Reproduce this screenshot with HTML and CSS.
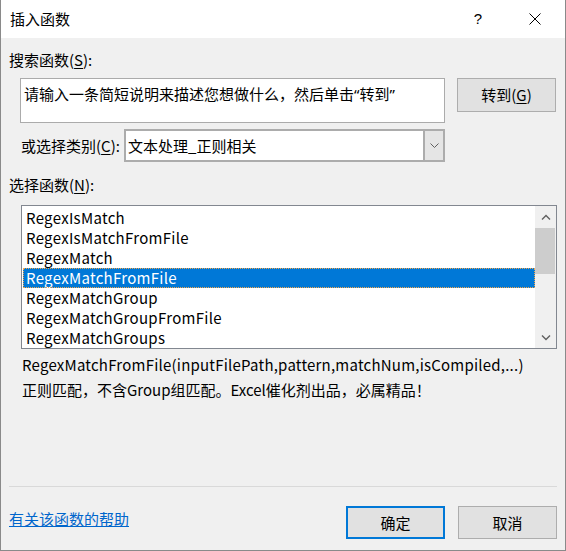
FILE: index.html
```html
<!DOCTYPE html>
<html lang="zh-CN">
<head>
  <meta charset="UTF-8" />
  <meta name="viewport" content="width=device-width, initial-scale=1.0"/>
  <title>插入函数</title>
  <link rel="stylesheet" href="styles.css">
</head>
<body>
  <div class="dialog">
    <div class="titlebar">
      <span class="title">插入函数</span>
      <span class="help">?</span>
      <span class="close">
        <svg width="12" height="12" viewBox="0 0 12 12"><path d="M0.5 0.5L11.5 11.5M11.5 0.5L0.5 11.5" stroke="#000" stroke-width="1" fill="none"/></svg>
      </span>
    </div>

    <div class="content">
      <div class="label">搜索函数(<u>S</u>):</div>
      <div class="search-row">
        <div class="search-box">请输入一条简短说明来描述您想做什么，然后单击<span class="quote">“</span>转到<span class="quote">”</span></div>
        <button class="btn go">转到(<u>G</u>)</button>
      </div>

      <div class="category-row">
        <span class="category-label">或选择类别(<u>C</u>):</span>
        <div class="combo">
          <span class="combo-text">文本处理_正则相关</span>
          <span class="combo-arrow">
            <svg width="9" height="5" viewBox="0 0 9 5"><path d="M0.5 0.5L4.5 4.5L8.5 0.5" stroke="#606060" stroke-width="1" fill="none"/></svg>
          </span>
        </div>
      </div>

      <div class="label list-label">选择函数(<u>N</u>):</div>
      <div class="listbox">
        <ul class="items">
          <li>RegexIsMatch</li>
          <li>RegexIsMatchFromFile</li>
          <li>RegexMatch</li>
          <li class="selected">RegexMatchFromFile</li>
          <li>RegexMatchGroup</li>
          <li>RegexMatchGroupFromFile</li>
          <li>RegexMatchGroups</li>
        </ul>
        <div class="scrollbar">
          <span class="arrow">
            <svg width="10" height="6" viewBox="0 0 10 6"><path d="M1 5.5L5 1.5L9 5.5" stroke="#606060" stroke-width="1.4" fill="none"/></svg>
          </span>
          <span class="thumb"></span>
          <span class="track"></span>
          <span class="arrow">
            <svg width="10" height="6" viewBox="0 0 10 6"><path d="M1 0.5L5 4.5L9 0.5" stroke="#606060" stroke-width="1.4" fill="none"/></svg>
          </span>
        </div>
      </div>

      <div class="desc">
        <div class="signature">RegexMatchFromFile(inputFilePath,pattern,matchNum,isCompiled,...)</div>
        <div>正则匹配，不含Group组匹配。Excel催化剂出品，必属精品！</div>
      </div>
    </div>

    <div class="footer">
      <div class="separator"></div>
      <div class="footer-row">
        <a class="help-link" href="#">有关该函数的帮助</a>
        <button class="btn ok">确定</button>
        <button class="btn">取消</button>
      </div>
    </div>
  </div>
</body>
</html>
```

FILE: styles.css
```css
body {
  margin: 0;
  font-family: "Noto Sans CJK SC", "Noto Sans", sans-serif;
  font-size: 15px;
  color: #000;
}

.dialog {
  width: 566px;
  height: 551px;
  box-sizing: border-box;
  border: 1px solid #8a8a8a;
  border-top: none;
  background: #f0f0f0;
  display: flex;
  flex-direction: column;
}

.titlebar {
  height: 38px;
  background: #fff;
  display: flex;
  align-items: center;
  padding-left: 9px;
}

.title {
  line-height: 20px;
  flex: 1;
}

.help {
  width: 46px;
  text-align: center;
  font-family: "Liberation Sans", sans-serif;
  font-size: 15px;
  margin-top: -1px;
}

.close {
  width: 46px;
  margin-left: 11px;
  margin-right: 7px;
  display: flex;
  justify-content: center;
}

.content {
  padding-left: 8px;
  padding-right: 8px;
}

.label {
  line-height: 20px;
  margin-top: 12px;
}

u {
  text-decoration-thickness: 1px;
  text-underline-offset: 2px;
}

.search-row {
  display: flex;
  align-items: flex-start;
  margin-top: 8px;
  margin-left: 11px;
}

.search-box {
  width: 425px;
  height: 45px;
  box-sizing: border-box;
  background: #fff;
  border: 1px solid #ababab;
  padding: 5px 0 0 3px;
  line-height: 20px;
  white-space: nowrap;
}

.quote {
  font-family: "Noto Sans", sans-serif;
}

.btn {
  font-family: inherit;
  font-size: 15px;
  color: #000;
  width: 99px;
  height: 34px;
  background: #e1e1e1;
  border: 1px solid #adadad;
  padding: 0;
  line-height: 20px;
}

.go {
  margin-left: 12px;
}

.category-row {
  display: flex;
  align-items: center;
  margin-top: 6px;
  margin-left: 12px;
}

.category-label {
  width: 103px;
  line-height: 20px;
}

.combo {
  width: 321px;
  height: 33px;
  box-sizing: border-box;
  border: 2px solid #acacac;
  background: #fff;
  display: flex;
}

.combo-text {
  flex: 1;
  padding-left: 2px;
  line-height: 29px;
}

.combo-arrow {
  width: 18px;
  background: #e5e5e5;
  border-left: 2px solid #acacac;
  display: flex;
  align-items: center;
  justify-content: center;
}

.list-label {
  margin-top: 13px;
}

.listbox {
  width: 536px;
  height: 144px;
  box-sizing: border-box;
  margin-top: 10px;
  margin-left: 12px;
  border: 1px solid #828790;
  background: #fff;
  display: flex;
}

.items {
  list-style: none;
  margin: 0;
  padding: 2px 0 0 0;
  flex: 1;
}

.items li {
  height: 20px;
  line-height: 20px;
  padding-left: 3px;
  margin-left: 1px;
  letter-spacing: 0.3px;
  white-space: nowrap;
}

.items li.selected {
  background: #0078d7;
  color: #fff;
  outline: 1px dotted #f2a64c;
  outline-offset: -1px;
}

.scrollbar {
  width: 21px;
  background: #f0f0f0;
  display: flex;
  flex-direction: column;
}

.arrow {
  height: 21px;
  display: flex;
  align-items: center;
  justify-content: center;
}

.thumb {
  height: 46px;
  margin: 1px 1px 0 0;
  background: #cdcdcd;
}

.track {
  flex: 1;
}

.desc {
  margin-top: 3px;
  margin-left: 13px;
  line-height: 25px;
  white-space: nowrap;
}

.signature {
  letter-spacing: 0.22px;
}

.footer {
  margin-top: auto;
  padding: 0 8px 11px 8px;
}

.separator {
  height: 1px;
  background: #d9d9d9;
}

.footer-row {
  display: flex;
  align-items: center;
  margin-top: 19px;
}

.footer-row .btn {
  height: 33px;
  margin-left: 13px;
}

.help-link {
  flex: 1;
  color: #0066cc;
  line-height: 20px;
  margin-top: -7px;
}

.footer-row .ok {
  border: 2px solid #0078d7;
}
```
